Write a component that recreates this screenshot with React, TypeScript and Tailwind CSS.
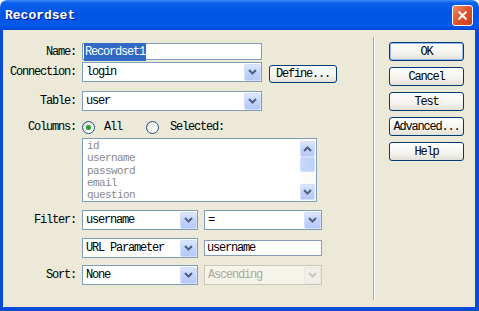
import React from 'react';

const Chevron = ({ color = '#4D6185' }: { color?: string }) => (
  <svg width="9" height="6" viewBox="0 0 9 6">
    <path d="M1 1 L4.5 4.5 L8 1" fill="none" stroke={color} strokeWidth="2" />
  </svg>
);

const DropBtn = ({ disabled }: { disabled?: boolean }) => (
  <div
    className={`flex h-[17px] w-[17px] items-center justify-center rounded-[2px] border ${
      disabled
        ? 'border-[#E8E6DC] bg-[#F0EFE8]'
        : 'border-[#D2DEFB] bg-[linear-gradient(180deg,#DCE6FD_0%,#C3D4FC_50%,#B4C8F6_100%)]'
    }`}
  >
    <Chevron color={disabled ? '#C9C7BA' : '#4D6185'} />
  </div>
);

const Combo = ({
  value,
  className,
  disabled
}: {
  value: string;
  className: string;
  disabled?: boolean;
}) => (
  <div
    className={`flex h-[20px] items-center justify-between border pl-[3px] ${
      disabled ? 'border-[#C9C7BA] bg-[#F5F4EA] text-[#ACA899]' : 'border-[#7F9DB9] bg-white text-black'
    } ${className}`}
  >
    <span>{value}</span>
    <DropBtn disabled={disabled} />
  </div>
);

const Label = ({ text }: { text: string }) => (
  <div className="w-[74px] pr-[1px] text-right">{text}</div>
);

const Row = ({ className, children }: { className: string; children: React.ReactNode }) => (
  <div className={`flex items-center gap-[5px] ${className}`}>{children}</div>
);

const XPButton = ({ text, isDefault }: { text: string; isDefault?: boolean }) => (
  <div
    className={`flex h-[19px] w-[75px] items-center justify-center rounded-[3px] border border-[#003C74] bg-[linear-gradient(180deg,#FFFFFF_0%,#F4F3EE_60%,#E3E0D5_100%)] text-black ${
      isDefault ? 'shadow-[inset_0_0_0_1px_#9BB8F3]' : ''
    }`}
  >
    {text}
  </div>
);

const Radio = ({ checked }: { checked?: boolean }) => (
  <div className="flex h-[13px] w-[13px] items-center justify-center rounded-full border border-[#1C5180] bg-[linear-gradient(135deg,#DCDBD5_0%,#FFFFFF_70%)]">
    {checked && <div className="h-[5px] w-[5px] rounded-full bg-[#21A121]" />}
  </div>
);

const ScrollBtn = ({ up }: { up?: boolean }) => (
  <div className="flex h-[16px] w-[15px] items-center justify-center rounded-[2px] border border-[#D2DEFB] bg-[linear-gradient(180deg,#DCE6FD_0%,#C3D4FC_50%,#B4C8F6_100%)]">
    <svg width="9" height="6" viewBox="0 0 9 6">
      <path d={up ? 'M1 5 L4.5 1.5 L8 5' : 'M1 1 L4.5 4.5 L8 1'} fill="none" stroke="#4D6185" strokeWidth="2" />
    </svg>
  </div>
);

const columns = ['id', 'username', 'password', 'email', 'question'];

const App: React.FC = () => {
  return (
    <div className="flex h-[311px] w-[479px] flex-col bg-white font-['Liberation_Mono',monospace] text-[12px] tracking-[-1.2px] text-black">
      {/* Title bar */}
      <div className="flex h-[30px] items-center rounded-t-[7px] bg-[linear-gradient(180deg,#3D8BF5_0%,#0A5FEB_10%,#0055E5_45%,#0058EA_85%,#0048D6_100%)] pl-[5px] pr-[6px]">
        <span className="flex-1 pt-[2px] text-[13px] font-bold tracking-normal text-white [text-shadow:1px_1px_#0A1883]">
          Recordset
        </span>
        <div className="mt-[1px] flex h-[21px] w-[21px] items-center justify-center rounded-[3px] border border-white bg-[linear-gradient(135deg,#F08A6A_0%,#E0522A_50%,#C8401C_100%)]">
          <svg width="11" height="11" viewBox="0 0 11 11">
            <path d="M1.5 1.5 L9.5 9.5 M9.5 1.5 L1.5 9.5" stroke="white" strokeWidth="2" />
          </svg>
        </div>
      </div>

      {/* Body */}
      <div className="flex flex-1 border-b-[4px] border-l-[3px] border-r-[4px] border-[#0A4BD8] bg-[#ECE9D8]">
        <div className="flex w-[370px] flex-col">
          <Row className="mt-[13px] h-[17px]">
            <Label text="Name:" />
            <div className="flex h-[17px] w-[180px] items-center border border-[#7F9DB9] bg-white pl-[1px]">
              <span className="bg-[#316AC5] px-[1px] text-white">Recordset1</span>
            </div>
          </Row>
          <Row className="mt-[2px] h-[20px]">
            <Label text="Connection:" />
            <Combo value="login" className="w-[180px]" />
            <div className="ml-[2px] mt-[3px] flex h-[18px] w-[68px] items-center justify-center rounded-[3px] border border-[#003C74] bg-[linear-gradient(180deg,#FFFFFF_0%,#F4F3EE_60%,#E3E0D5_100%)]">
              Define...
            </div>
          </Row>
          <Row className="mt-[9px] h-[20px]">
            <Label text="Table:" />
            <Combo value="user" className="w-[180px]" />
          </Row>
          <Row className="mt-[8px] h-[16px]">
            <Label text="Columns:" />
            <div className="flex items-center">
              <Radio checked />
              <span className="ml-[9px]">All</span>
              <div className="ml-[24px]">
                <Radio />
              </div>
              <span className="ml-[11px]">Selected:</span>
            </div>
          </Row>
          <Row className="mt-[3px] h-[64px]">
            <div className="w-[74px]" />
            <div className="flex h-[64px] w-[235px] border border-[#7F9DB9] bg-white">
              <div className="flex flex-1 flex-col pl-[4px] pt-[1px] text-[11px] leading-[12.3px] tracking-[-0.6px] text-[#8A8A8A]">
                {columns.map((c) => (
                  <span key={c}>{c}</span>
                ))}
              </div>
              <div className="flex w-[16px] flex-col bg-[#FBFBF8] pt-[2px]">
                <ScrollBtn up />
                <div className="h-[15px] w-[15px] rounded-[2px] border border-[#D2DEFB] bg-[linear-gradient(90deg,#C8D8FC_0%,#BCCFF9_100%)]" />
                <div className="flex-1" />
                <div className="mb-[1px]">
                  <ScrollBtn />
                </div>
              </div>
            </div>
          </Row>
          <Row className="mt-[8px] h-[20px]">
            <Label text="Filter:" />
            <Combo value="username" className="w-[116px]" />
            <Combo value="=" className="ml-[1px] w-[118px]" />
          </Row>
          <Row className="mt-[8px] h-[20px]">
            <div className="w-[74px]" />
            <Combo value="URL Parameter" className="w-[116px]" />
            <div className="ml-[1px] flex h-[16px] w-[118px] items-center border border-[#7F9DB9] bg-white pl-[2px]">
              username
            </div>
          </Row>
          <Row className="mt-[7px] h-[20px]">
            <Label text="Sort:" />
            <Combo value="None" className="w-[116px]" />
            <Combo value="Ascending" disabled className="ml-[1px] w-[118px]" />
          </Row>
        </div>

        {/* Separator */}
        <div className="my-[7px] w-[2px] border-l border-r border-l-[#ACA899] border-r-white" />

        {/* Buttons */}
        <div className="flex flex-col gap-[6px] pl-[14px] pt-[12px]">
          <XPButton text="OK" isDefault />
          <XPButton text="Cancel" />
          <XPButton text="Test" />
          <XPButton text="Advanced..." />
          <XPButton text="Help" />
        </div>
      </div>
    </div>
  );
};

export default App;
